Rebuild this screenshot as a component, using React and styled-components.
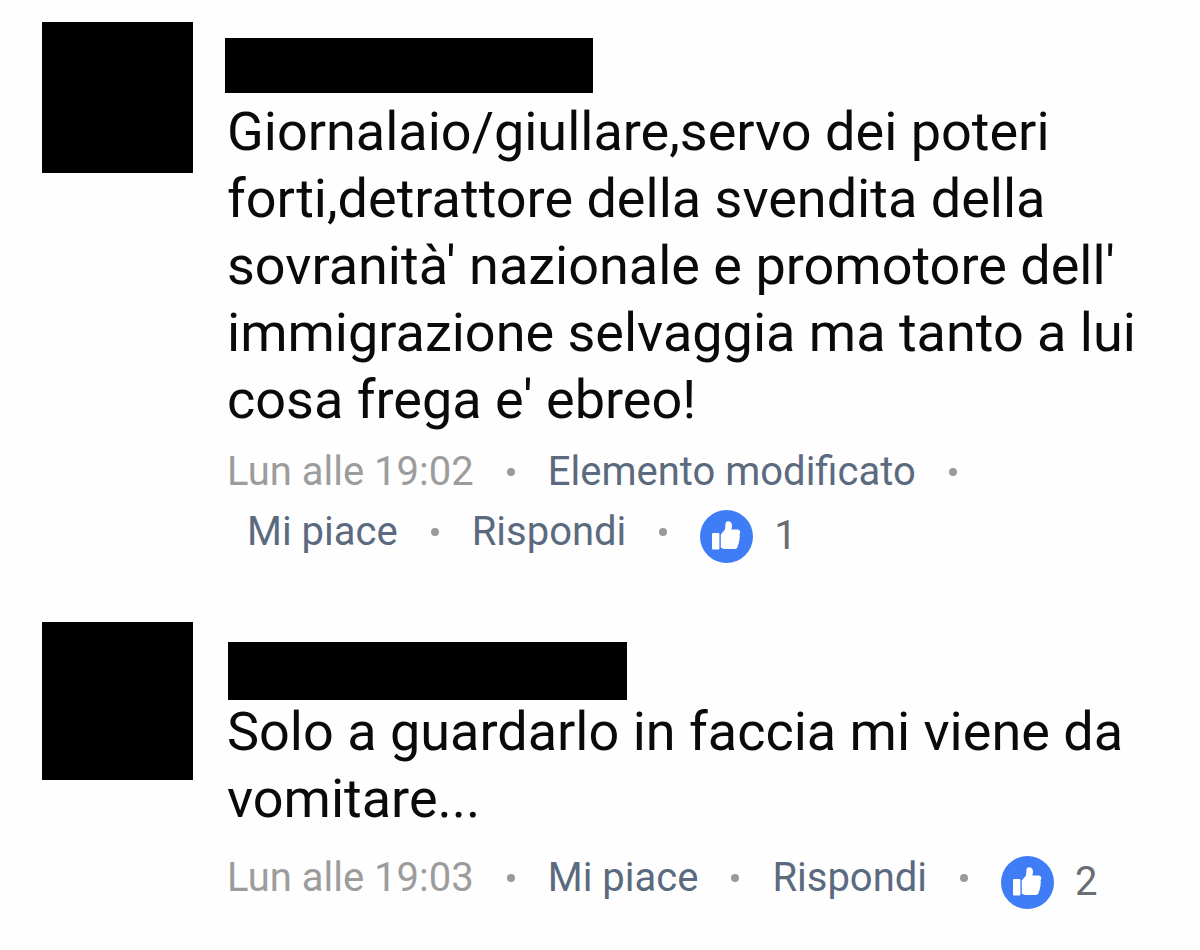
import React from 'react';
import styled, { createGlobalStyle } from 'styled-components';

const GlobalStyle = createGlobalStyle`
  * {
    box-sizing: border-box;
  }

  body {
    margin: 0;
    background: #fefefe;
    font-family: Roboto, 'Liberation Sans', sans-serif;
  }
`;

const CommentList = styled.main`
  display: flex;
  flex-direction: column;
  gap: 60px;
  padding: 22px 42px;
`;

const CommentContainer = styled.article`
  display: flex;
  align-items: flex-start;
  gap: 32px;
`;

const Avatar = styled.div`
  flex: none;
  width: 151px;
  height: ${(props) => props.$height}px;
  background: #000;
`;

const CommentBody = styled.div`
  flex: 1;
  min-width: 0;
`;

const CommentHeader = styled.header`
  height: 76px;
  padding-top: 16px;
`;

const HiddenName = styled.div`
  width: ${(props) => props.$width}px;
  height: ${(props) => props.$height}px;
  margin: ${(props) => props.$margin};
  background: #000;
`;

const CommentText = styled.p`
  margin: 0;
  padding-left: 2px;
  color: #0a0a0a;
  font-size: 54px;
  line-height: 67px;
`;

const CommentFooter = styled.footer`
  padding: ${(props) => props.$space}px 0 0 2px;
`;

const MetaRow = styled.div`
  display: flex;
  align-items: center;
  gap: 33px;
  height: 60px;
  padding-left: ${(props) => (props.$indent ? 20 : 0)}px;
  color: #9c9c9c;
  font-size: 40px;
  line-height: 60px;
  white-space: nowrap;
`;

const ActionButton = styled.button`
  padding: 0;
  border: none;
  background: none;
  color: #5b6a7e;
  font: inherit;
  cursor: pointer;
`;

const Dot = styled.span`
  flex: none;
  width: 8px;
  height: 8px;
  border-radius: 50%;
  background: #9a9a9a;
`;

const Reactions = styled.span`
  display: flex;
  align-items: center;
  gap: 21px;
  padding-top: 8px;
  color: #6a6d72;
`;

const LikeIcon = () => (
  <svg width='53' height='53' viewBox='0 0 53 53' aria-hidden='true'>
    <circle cx='26.5' cy='26.5' r='26.5' fill='#3e7df6' />
    <rect x='12' y='23' width='7.4' height='16.4' rx='1' fill='#fff' />
    <path
      d='M20.8 24.5 L25 19.5 L25.6 13 Q25.8 11.2 28 11.2 Q32 11.4 32 16 L31.4 19.4 H37.4 Q40.4 19.6 40.2 22.6 Q40.1 24 39.4 24.8 Q40.6 26.4 39.4 28.4 Q40 30.2 38.8 32 Q39.2 34 37.8 35.4 Q37.8 38.8 34.6 39 H24.4 Q22.4 38.8 20.8 37.6 Z'
      fill='#fff'
    />
  </svg>
);

const Likes = ({ count }) => (
  <Reactions>
    <LikeIcon />
    <span>{count}</span>
  </Reactions>
);

function App() {
  return (
    <>
      <GlobalStyle />
      <CommentList>
        <CommentContainer>
          <Avatar $height={151} />
          <CommentBody>
            <CommentHeader>
              <HiddenName $width={368} $height={55} />
            </CommentHeader>
            <CommentText>
              Giornalaio/giullare,servo dei poteri forti,detrattore della
              svendita della sovranità' nazionale e promotore dell'
              immigrazione selvaggia ma tanto a lui cosa frega e' ebreo!
            </CommentText>
            <CommentFooter $space={9}>
              <MetaRow>
                <time>Lun alle 19:02</time>
                <Dot />
                <ActionButton type='button'>Elemento modificato</ActionButton>
                <Dot />
              </MetaRow>
              <MetaRow $indent>
                <ActionButton type='button'>Mi piace</ActionButton>
                <Dot />
                <ActionButton type='button'>Rispondi</ActionButton>
                <Dot />
                <Likes count={1} />
              </MetaRow>
            </CommentFooter>
          </CommentBody>
        </CommentContainer>
        <CommentContainer>
          <Avatar $height={158} />
          <CommentBody>
            <CommentHeader>
              <HiddenName $width={399} $height={58} $margin='4px 0 0 3px' />
            </CommentHeader>
            <CommentText>
              Solo a guardarlo in faccia mi viene da vomitare...
            </CommentText>
            <CommentFooter $space={16}>
              <MetaRow>
                <time>Lun alle 19:03</time>
                <Dot />
                <ActionButton type='button'>Mi piace</ActionButton>
                <Dot />
                <ActionButton type='button'>Rispondi</ActionButton>
                <Dot />
                <Likes count={2} />
              </MetaRow>
            </CommentFooter>
          </CommentBody>
        </CommentContainer>
      </CommentList>
    </>
  );
}

export default App;
